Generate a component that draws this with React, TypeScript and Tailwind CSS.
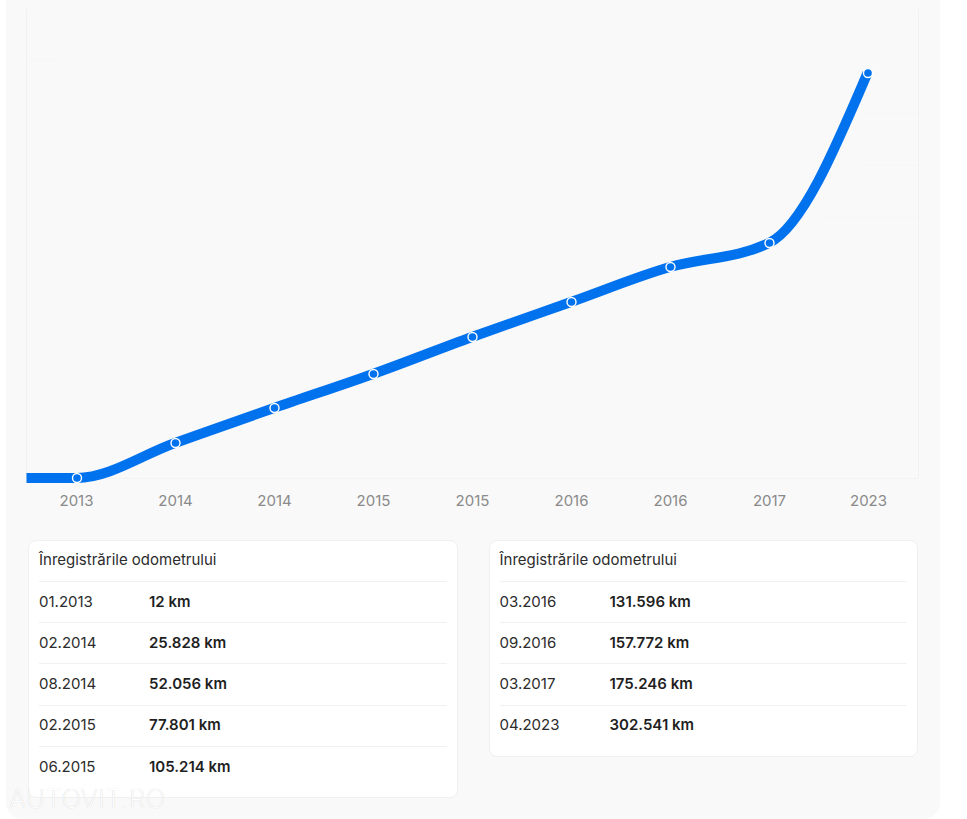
const points: Array<[number, number]> = [
  [0.5, 469],
  [50.5, 469],
  [149, 434],
  [248, 399],
  [347, 365],
  [446, 328],
  [545, 293],
  [644, 258],
  [743, 234],
  [841.5, 64],
];

const years = ["2013", "2014", "2014", "2015", "2015", "2016", "2016", "2017", "2023"];

const left = [
  { date: "01.2013", km: "12 km" },
  { date: "02.2014", km: "25.828 km" },
  { date: "08.2014", km: "52.056 km" },
  { date: "02.2015", km: "77.801 km" },
  { date: "06.2015", km: "105.214 km" },
];

const right = [
  { date: "03.2016", km: "131.596 km" },
  { date: "09.2016", km: "157.772 km" },
  { date: "03.2017", km: "175.246 km" },
  { date: "04.2023", km: "302.541 km" },
];

// monotone cubic, with the last two tangents set by hand to follow the steep end
function monotonePath(pts: Array<[number, number]>) {
  const n = pts.length;
  const dx = pts.slice(1).map((p, i) => p[0] - pts[i][0]);
  const s = pts.slice(1).map((p, i) => (p[1] - pts[i][1]) / dx[i]);
  const m = pts.map((_, i) => {
    if (i === 0) return s[0];
    if (i === n - 1) return -2.35;
    if (i === n - 2) return -0.48;
    if (s[i - 1] * s[i] <= 0) return 0;
    const w1 = 2 * dx[i] + dx[i - 1];
    const w2 = dx[i] + 2 * dx[i - 1];
    return (w1 + w2) / (w1 / s[i - 1] + w2 / s[i]);
  });
  let d = `M${pts[0][0]} ${pts[0][1]}`;
  for (let i = 0; i < n - 1; i++) {
    const h = dx[i] / 3;
    d += `C${pts[i][0] + h} ${pts[i][1] + m[i] * h} ${pts[i + 1][0] - h} ${pts[i + 1][1] - m[i + 1] * h} ${pts[i + 1][0]} ${pts[i + 1][1]}`;
  }
  return d;
}

function Card({ rows }: { rows: Array<{ date: string; km: string }> }) {
  return (
    <div className="rounded-lg border border-[#f0f0f0] bg-white px-[10px] pb-[10px]">
      <div className="flex h-[40px] items-center pb-[1px] text-[15px] text-[#2c2c2c]">Înregistrările odometrului</div>
      {rows.map((r) => (
        <div key={r.date} className="flex h-[41.2px] items-center border-t border-[#f1f1f1] text-[15px] text-[#2c2c2c]">
          <span className="w-[110px]">{r.date}</span>
          <span className="font-semibold text-[#1f1f1f]">{r.km}</span>
        </div>
      ))}
    </div>
  );
}

export default function App() {
  return (
    <div className="h-[819px] w-[967px] overflow-hidden bg-white font-['Inter',sans-serif]">
      <div className="relative ml-[6px] h-[819px] w-[934px] rounded-b-2xl bg-[#f9f9f9] pl-[20px] pt-[9px]">
        <svg width="894" height="474" viewBox="0 0 894 474" className="block overflow-visible">
          <path d="M0.5 0V469M892.5 0V469" stroke="#f1f1f1" fill="none" />
          <path d="M0.5 469.5H892" stroke="#f3f3f3" fill="none" />
          <path d="M0.5 51.5H28M835 104.5H892M835 156.5H892M800 208.5H892" stroke="#f6f6f6" fill="none" />
          <path d={monotonePath(points)} stroke="#0072ee" strokeWidth="10" fill="none" />
          {points.slice(1).map(([x, y]) => (
            <circle key={x} cx={x + 0.5} cy={y} r="4.5" fill="#0072ee" stroke="#ffffff" strokeWidth="1.4" />
          ))}
        </svg>
        <div className="ml-[1px] grid w-[891px] grid-cols-9 pt-[8px] text-center text-[15px] leading-[20px] text-[#8a8a8a]">
          {years.map((y, i) => (
            <span key={i}>{y}</span>
          ))}
        </div>
        <div className="ml-[2px] mt-[29px] grid w-[890px] grid-cols-2 items-start gap-x-[31px]">
          <Card rows={left} />
          <Card rows={right} />
        </div>
        <div className="absolute left-[3px] top-[783px] text-[26px] font-extralight leading-[32px] tracking-[0.5px] text-white [text-shadow:0_0_1px_#c8c8c8]">
          AUTOVIT.RO
        </div>
      </div>
    </div>
  );
}
